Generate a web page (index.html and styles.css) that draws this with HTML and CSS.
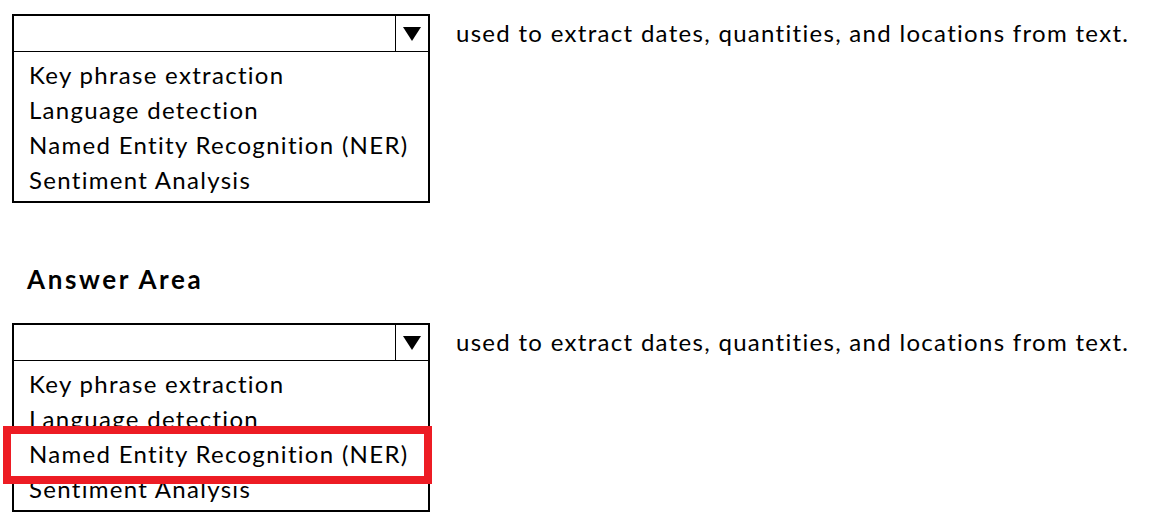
FILE: index.html
```html
<!DOCTYPE html>
<html lang="en">
<head>
<meta charset="utf-8">
<title>Answer Area</title>
<link rel="stylesheet" href="styles.css">
</head>
<body>
<div class="page">
  <div class="row">
    <div class="dropdown">
      <div class="dd-head">
        <div class="dd-value"></div>
        <div class="dd-btn"><svg width="18" height="14" viewBox="0 0 18 14"><polygon points="0,0 18,0 9,14" fill="#000"/></svg></div>
      </div>
      <ul class="dd-list">
        <li class="opt">Key phrase extraction</li>
        <li class="opt">Language detection</li>
        <li class="opt">Named Entity Recognition (NER)</li>
        <li class="opt">Sentiment Analysis</li>
      </ul>
    </div>
    <p class="stmt">used to extract dates, quantities, and locations from text.</p>
  </div>

  <h2 class="title">Answer Area</h2>

  <div class="row">
    <div class="dropdown">
      <div class="dd-head">
        <div class="dd-value"></div>
        <div class="dd-btn"><svg width="18" height="14" viewBox="0 0 18 14"><polygon points="0,0 18,0 9,14" fill="#000"/></svg></div>
      </div>
      <ul class="dd-list">
        <li class="opt">Key phrase extraction</li>
        <li class="opt">Language detection</li>
        <li class="opt selected">Named Entity Recognition (NER)</li>
        <li class="opt">Sentiment Analysis</li>
      </ul>
    </div>
    <p class="stmt">used to extract dates, quantities, and locations from text.</p>
  </div>
</div>
</body>
</html>
```

FILE: styles.css
```css
html, body {
  margin: 0;
  padding: 0;
  background: #fff;
}

body {
  font-family: Lato, "Open Sans", sans-serif;
  color: #000;
  font-size: 24px;
  letter-spacing: 1.3px;
}

.page {
  padding: 14px 0 0 12px;
}

.row {
  display: flex;
  align-items: flex-start;
}

.dropdown {
  width: 414px;
  height: 185px;
  border: 2px solid #000;
  display: flex;
  flex-direction: column;
}

.dd-head {
  display: flex;
  height: 35px;
  border-bottom: 1px solid #000;
}

.dd-value {
  flex: 1;
}

.dd-btn {
  width: 32px;
  border-left: 1px solid #000;
  display: flex;
  align-items: center;
  justify-content: center;
}

.dd-list {
  list-style: none;
  margin: 0;
  padding: 5px 0 0 0;
}

.opt {
  line-height: 35px;
  height: 35px;
  padding-left: 15px;
  white-space: nowrap;
}

.opt.selected {
  position: relative;
  z-index: 0;
}

.opt.selected::before {
  content: "";
  position: absolute;
  left: -11px;
  right: -4px;
  top: -10px;
  bottom: -13px;
  border: 8px solid #ed1c24;
  background: #fff;
  z-index: -1;
}

.stmt {
  margin: 0 0 0 26px;
  line-height: 35px;
  padding-top: 1px;
  white-space: nowrap;
}

.title {
  margin: 61px 0 29px 15px;
  font-size: 26px;
  font-weight: 700;
  letter-spacing: 2.6px;
  line-height: 30px;
}
```
